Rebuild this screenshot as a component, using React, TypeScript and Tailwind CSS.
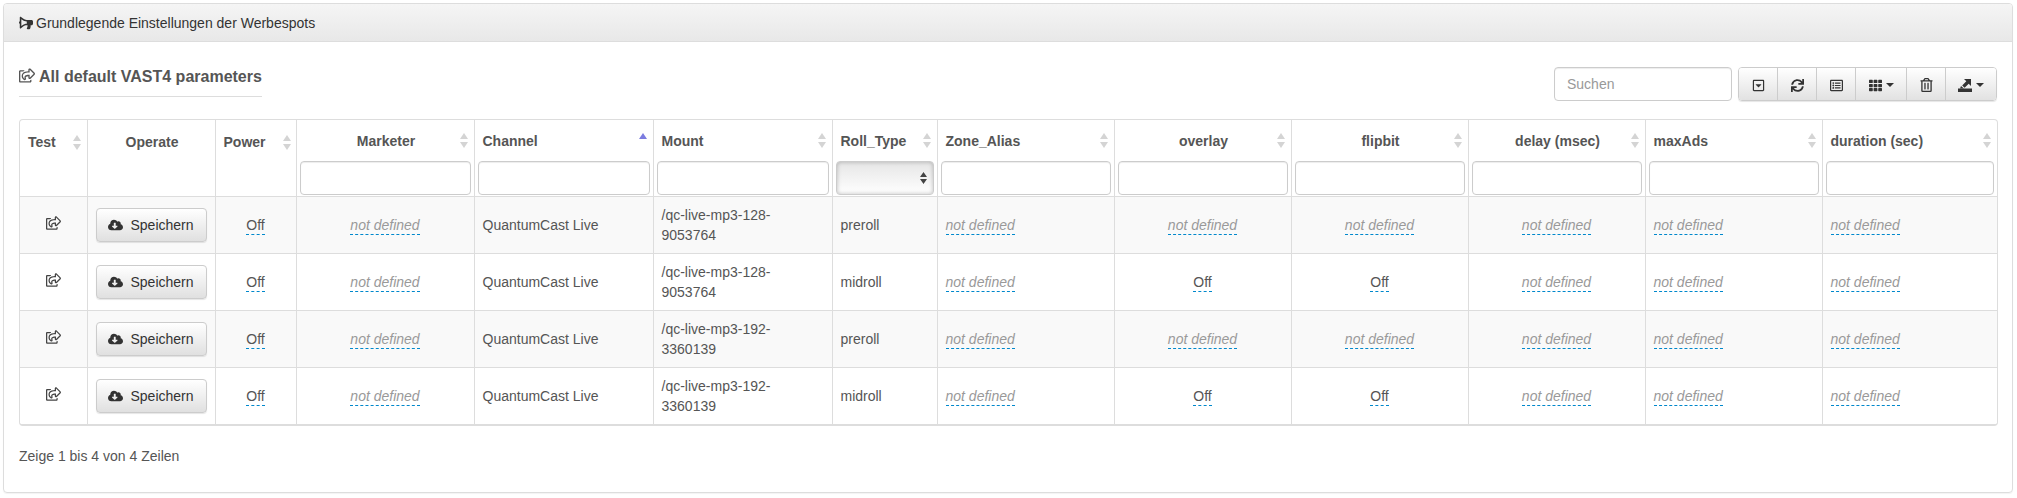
import { FaBullhorn, FaCloudDownloadAlt, FaRegCaretSquareDown, FaRegListAlt, FaRegShareSquare, FaRegTrashAlt, FaSync, FaTh } from "react-icons/fa";

type Cell = { text: string; plain?: boolean };

const nd: Cell = { text: "not defined" };
const off: Cell = { text: "Off" };

const columns = ["Marketer", "Channel", "Mount", "Roll_Type", "Zone_Alias", "overlay", "flipbit", "delay (msec)", "maxAds", "duration (sec)"];

const rows = [
  { mount: "/qc-live-mp3-128-9053764", roll: "preroll", overlay: nd, flipbit: nd },
  { mount: "/qc-live-mp3-128-9053764", roll: "midroll", overlay: off, flipbit: off },
  { mount: "/qc-live-mp3-192-3360139", roll: "preroll", overlay: nd, flipbit: nd },
  { mount: "/qc-live-mp3-192-3360139", roll: "midroll", overlay: off, flipbit: off },
];

const SortIcon = ({ active }: { active?: boolean }) => (
  <svg width="8" height="15" viewBox="0 0 8 15" className="shrink-0">
    <path d="M4 0 L8 6 H0 Z" fill={active ? "#7c7ce0" : "#d4d4d4"} />
    {!active && <path d="M4 15 L0 9 H8 Z" fill="#d4d4d4" />}
  </svg>
);

const Editable = ({ cell }: { cell: Cell }) => (
  <span className={`border-b border-dashed border-[#0088cc] leading-[17px] inline-block ${cell.text === "Off" ? "text-[#555]" : "italic text-[#999]"}`}>
    {cell.text}
  </span>
);

const ExportIcon = () => (
  <svg width="14" height="14" viewBox="0 0 14 14" fill="#333">
    <path d="M0 10.5h14V14H0z" />
    <path d="M6 1h7v7l-2.3-2.3L6.6 9.8 4.2 7.4 8.3 3.3z" />
    <path d="M3 8l3 2.5H2z" />
  </svg>
);

const Caret = () => <span className="inline-block ml-1 border-x-[4px] border-t-[4px] border-x-transparent border-t-[#333]" />;

const toolBtn = "h-[34px] flex items-center justify-center border-r border-[#ccc] last:border-r-0 bg-gradient-to-b from-white to-[#e0e0e0] text-[#333]";

const thBase = "border-r border-[#ddd] last:border-r-0 align-top p-0 font-bold text-[#555]";
const tdBase = "border-r border-t border-[#ddd] last:border-r-0 px-2 align-middle";

export default function App() {
  return (
    <div className="p-[3px] pr-[4px] bg-white text-[14px] leading-[20px] text-[#555] font-['Liberation_Sans',Arial,sans-serif]">
      <div className="h-[490px] border border-[#ddd] rounded-[4px] overflow-hidden shadow-[0_1px_1px_rgba(0,0,0,0.05)]">
        <div className="h-[38px] px-[15px] flex items-center gap-[3px] border-b border-[#ddd] bg-gradient-to-b from-[#f5f5f5] to-[#e8e8e8] text-[#333]">
          <FaBullhorn className="w-[14px] h-[14px] -scale-x-100" />
          <span>Grundlegende Einstellungen der Werbespots</span>
        </div>

        <div className="px-[15px] pt-[25px]">
          <div className="flex justify-between h-[52px]">
            <h3 className="self-start w-[243px] h-[30px] border-b border-[#ddd] text-[16px] leading-[20px] font-bold flex items-start gap-[4px] text-[#555]">
              <FaRegShareSquare className="w-[16px] h-[15px] mt-[1px]" />
              All default VAST4 parameters
            </h3>
            <div className="flex gap-[6px] pr-[0px]">
              <input
                placeholder="Suchen"
                className="w-[178px] h-[34px] border border-[#ccc] rounded-[4px] px-[12px] outline-none placeholder:text-[#999] shadow-[inset_0_1px_1px_rgba(0,0,0,0.075)]"
              />
              <div className="flex h-[34px] w-[259px] rounded-[4px] border border-[#ccc] overflow-hidden shadow-[0_1px_1px_rgba(0,0,0,0.1)]">
                <button className={`${toolBtn} w-[39px]`}><FaRegCaretSquareDown className="w-[13px] h-[13px]" /></button>
                <button className={`${toolBtn} w-[39px]`}><FaSync className="w-[13px] h-[13px]" /></button>
                <button className={`${toolBtn} w-[39px]`}><FaRegListAlt className="w-[13px] h-[13px]" /></button>
                <button className={`${toolBtn} w-[51px]`}><FaTh className="w-[13px] h-[13px]" /><Caret /></button>
                <button className={`${toolBtn} w-[39px]`}><FaRegTrashAlt className="w-[13px] h-[14px]" /></button>
                <button className={`${toolBtn} flex-1`}><ExportIcon /><Caret /></button>
              </div>
            </div>
          </div>

          <div className="w-[1979px] border border-[#ddd] border-b-2 rounded-[4px] overflow-hidden">
            <table className="w-full table-fixed border-collapse">
              <colgroup>
                <col className="w-[67px]" />
                <col className="w-[128px]" />
                <col className="w-[81px]" />
                <col className="w-[178px]" />
                <col className="w-[179px]" />
                <col className="w-[179px]" />
                <col className="w-[105px]" />
                <col className="w-[177px]" />
                <col className="w-[177px]" />
                <col className="w-[177px]" />
                <col className="w-[177px]" />
                <col className="w-[177px]" />
                <col />
              </colgroup>
              <thead>
                <tr className="h-[76px]">
                  <th className={thBase}>
                    <div className="flex items-center justify-between pl-[8px] pr-[6px] pt-[12px]">Test<SortIcon /></div>
                  </th>
                  <th className={`${thBase} text-center`}>
                    <div className="pt-[12px] pl-[2px]">Operate</div>
                  </th>
                  <th className={thBase}>
                    <div className="flex items-center justify-between pl-[8px] pr-[5px] pt-[12px]">Power<SortIcon /></div>
                  </th>
                  {columns.map((c) => (
                    <th key={c} className={thBase}>
                      <div className={`relative flex items-center pl-[8px] pr-[6px] pt-[11px] h-[31px] ${c === "Marketer" || c === "overlay" || c === "flipbit" || c === "delay (msec)" ? "justify-center" : ""}`}>
                        {c}
                        <span className="absolute right-[6px] top-[13px]"><SortIcon active={c === "Channel"} /></span>
                      </div>
                      <div className="px-[3px] pt-[10px]">
                        {c === "Roll_Type" ? (
                          <div className="h-[34px] border border-[#ccc] rounded-[4px] relative bg-gradient-to-b from-[#e6e6e6] to-white shadow-[inset_0_0_4px_rgba(0,0,0,0.25)]">
                            <svg width="7" height="12" viewBox="0 0 7 12" className="absolute right-[6px] top-[10px]">
                              <path d="M3.5 0 L7 5 H0 Z M3.5 12 L0 7 H7 Z" fill="#444" />
                            </svg>
                          </div>
                        ) : (
                          <input className="block w-full h-[34px] border border-[#ccc] rounded-[4px] outline-none shadow-[inset_0_1px_1px_rgba(0,0,0,0.075)]" />
                        )}
                      </div>
                    </th>
                  ))}
                </tr>
              </thead>
              <tbody>
                {rows.map((r, i) => (
                  <tr key={i} className={`h-[57px] ${i % 2 === 0 ? "bg-[#f9f9f9]" : "bg-white"}`}>
                    <td className={`${tdBase} text-center`}>
                      <FaRegShareSquare className="inline-block w-[15px] h-[14px] mb-[5px] text-[#444]" />
                    </td>
                    <td className={`${tdBase} text-center`}>
                      <button className="w-[111px] h-[34px] inline-flex items-center justify-center gap-[7px] border border-[#ccc] rounded-[4px] bg-gradient-to-b from-white to-[#e0e0e0] text-[#333] shadow-[0_1px_1px_rgba(0,0,0,0.1)]">
                        <FaCloudDownloadAlt className="w-[15px] h-[14px]" />
                        Speichern
                      </button>
                    </td>
                    <td className={`${tdBase} text-center`}><Editable cell={off} /></td>
                    <td className={`${tdBase} text-center`}><Editable cell={nd} /></td>
                    <td className={tdBase}>QuantumCast Live</td>
                    <td className={tdBase}><div className="w-[120px]">{r.mount}</div></td>
                    <td className={tdBase}>{r.roll}</td>
                    <td className={tdBase}><Editable cell={nd} /></td>
                    <td className={`${tdBase} text-center`}><Editable cell={r.overlay} /></td>
                    <td className={`${tdBase} text-center`}><Editable cell={r.flipbit} /></td>
                    <td className={`${tdBase} text-center`}><Editable cell={nd} /></td>
                    <td className={tdBase}><Editable cell={nd} /></td>
                    <td className={tdBase}><Editable cell={nd} /></td>
                  </tr>
                ))}
              </tbody>
            </table>
          </div>

          <div className="mt-[20px]">Zeige 1 bis 4 von 4 Zeilen</div>
        </div>
      </div>
    </div>
  );
}
